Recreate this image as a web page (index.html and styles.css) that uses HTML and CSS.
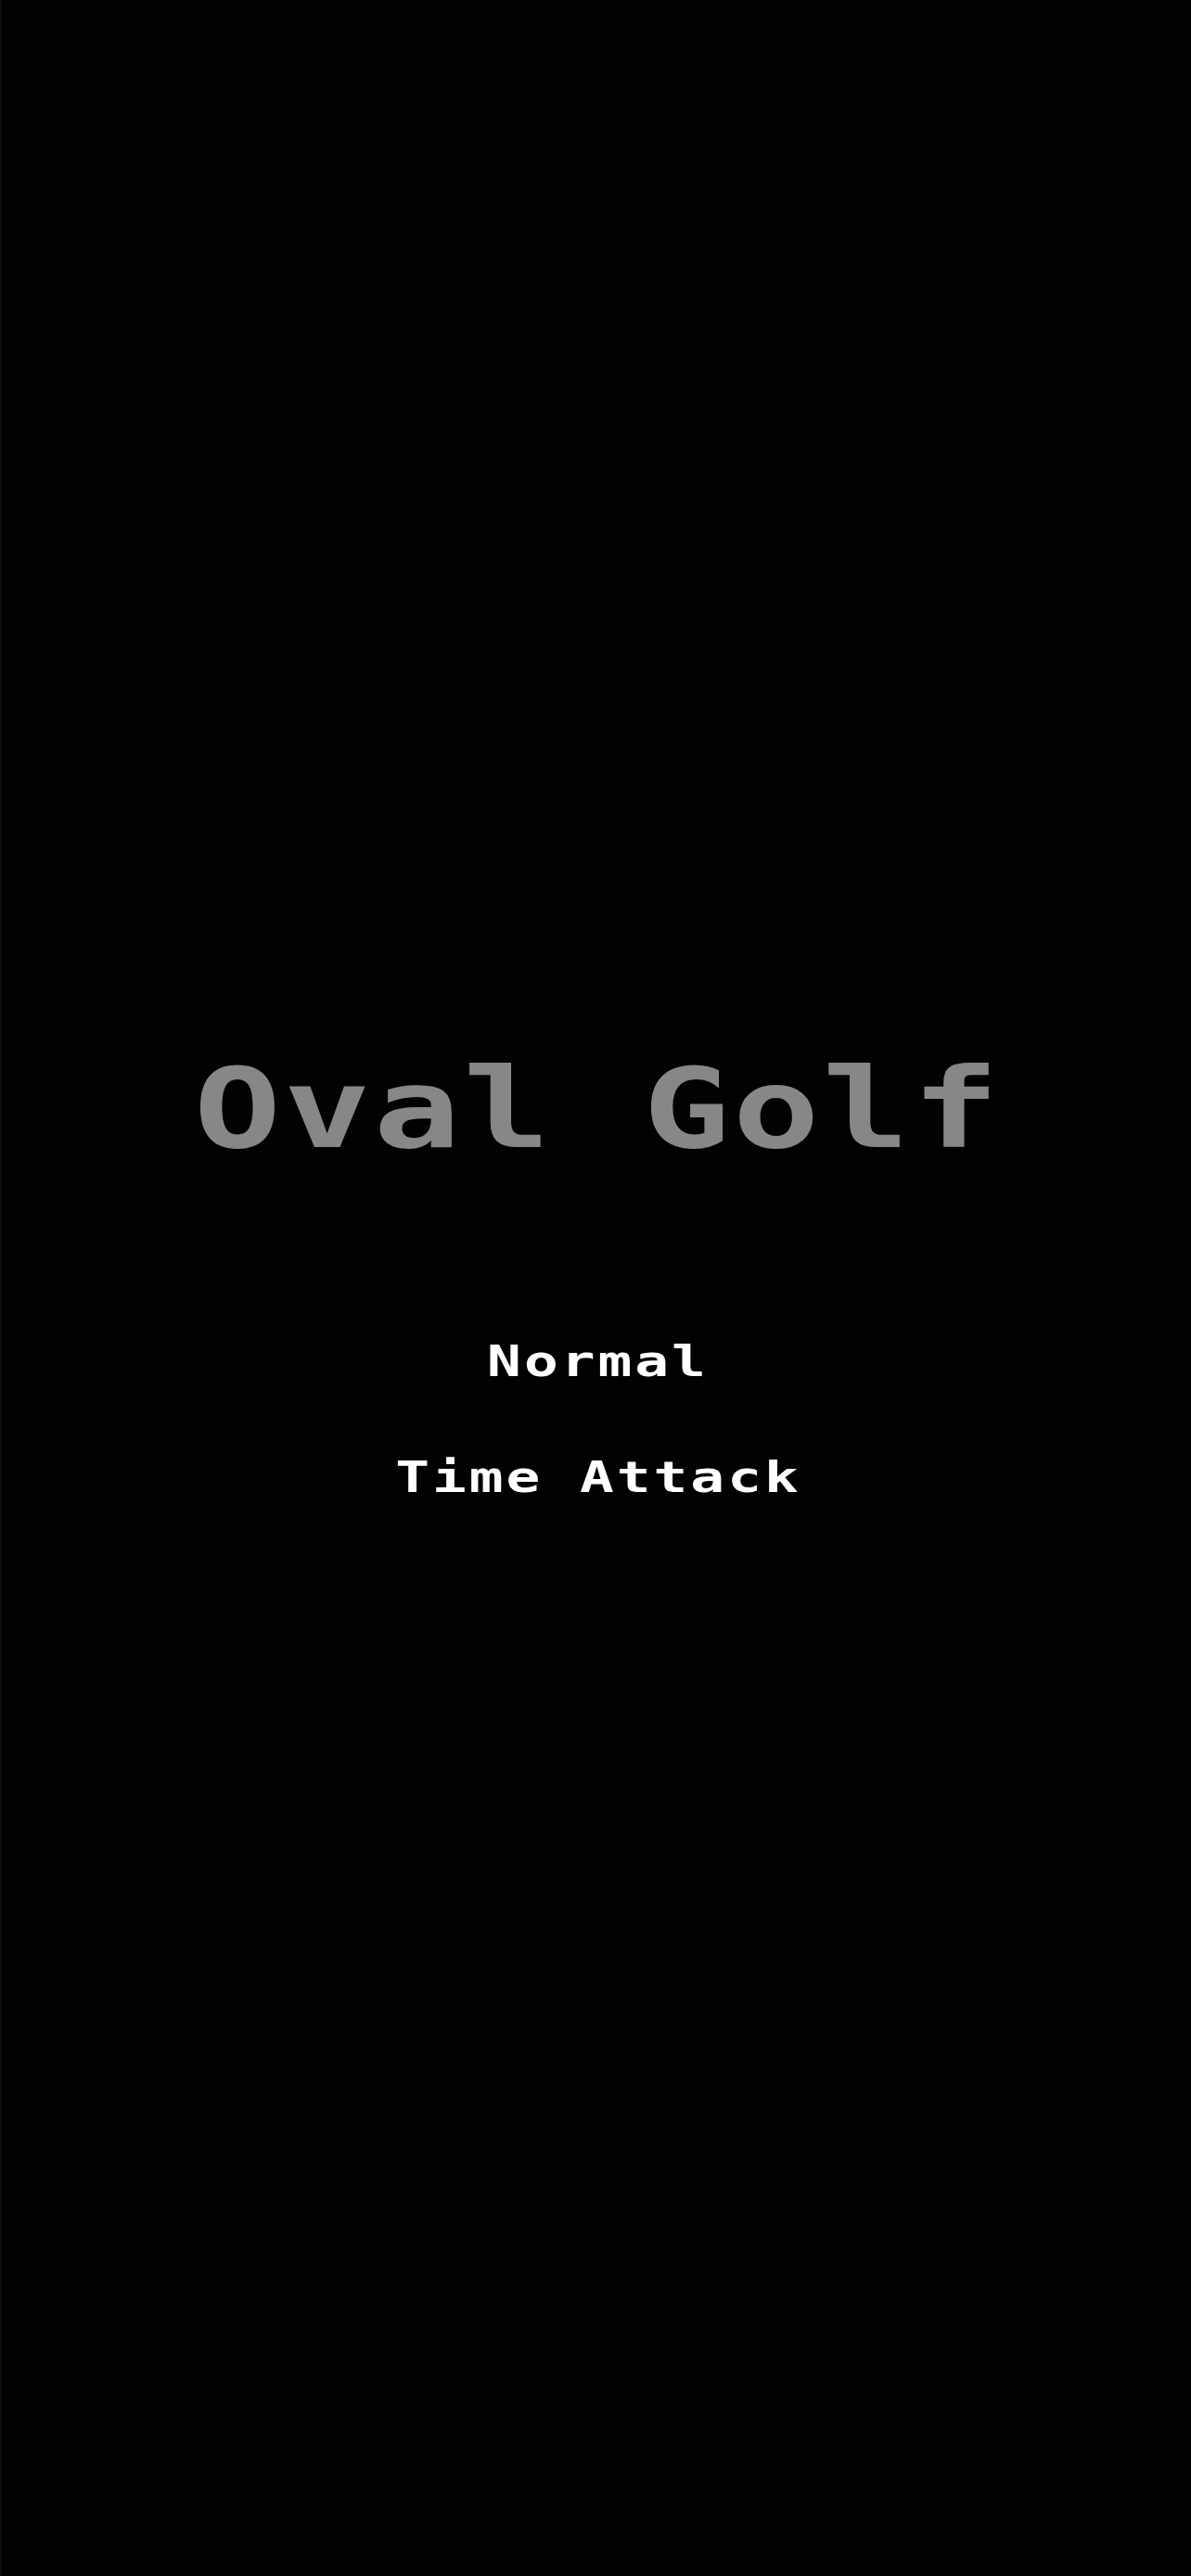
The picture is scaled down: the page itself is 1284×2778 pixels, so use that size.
FILE: index.html
```html
<!DOCTYPE html>
<html lang="en">
<head>
<meta charset="utf-8">
<title>Oval Golf</title>
<link rel="stylesheet" href="styles.css">
</head>
<body>
<main class="screen">
  <h1 class="title">Oval Golf</h1>
  <nav class="menu">
    <div class="menu-item">Normal</div>
    <div class="menu-item">Time Attack</div>
  </nav>
</main>
</body>
</html>
```
FILE: styles.css
```css
html, body {
  margin: 0;
  padding: 0;
  background: #020202;
}
.screen {
  width: 1284px;
  height: 2778px;
  box-sizing: border-box;
  border-left: 2px solid #0d0d0d;
  padding-top: 1136px;
  display: flex;
  flex-direction: column;
  align-items: center;
  font-family: "DejaVu Sans Mono", "Liberation Mono", monospace;
  font-weight: bold;
}
.title {
  margin: 0;
  font-size: 120px;
  line-height: 120px;
  font-weight: bold;
  color: #878787;
  letter-spacing: 2.2px;
  padding-left: 2.2px;
  white-space: pre;
  transform: scaleX(1.3);
}
.menu {
  margin-top: 188px;
  display: flex;
  flex-direction: column;
  align-items: center;
  gap: 78px;
}
.menu-item {
  font-size: 47px;
  line-height: 47px;
  color: #ffffff;
  letter-spacing: 2.3px;
  padding-left: 2.3px;
  white-space: pre;
  transform: scaleX(1.3);
}
```
